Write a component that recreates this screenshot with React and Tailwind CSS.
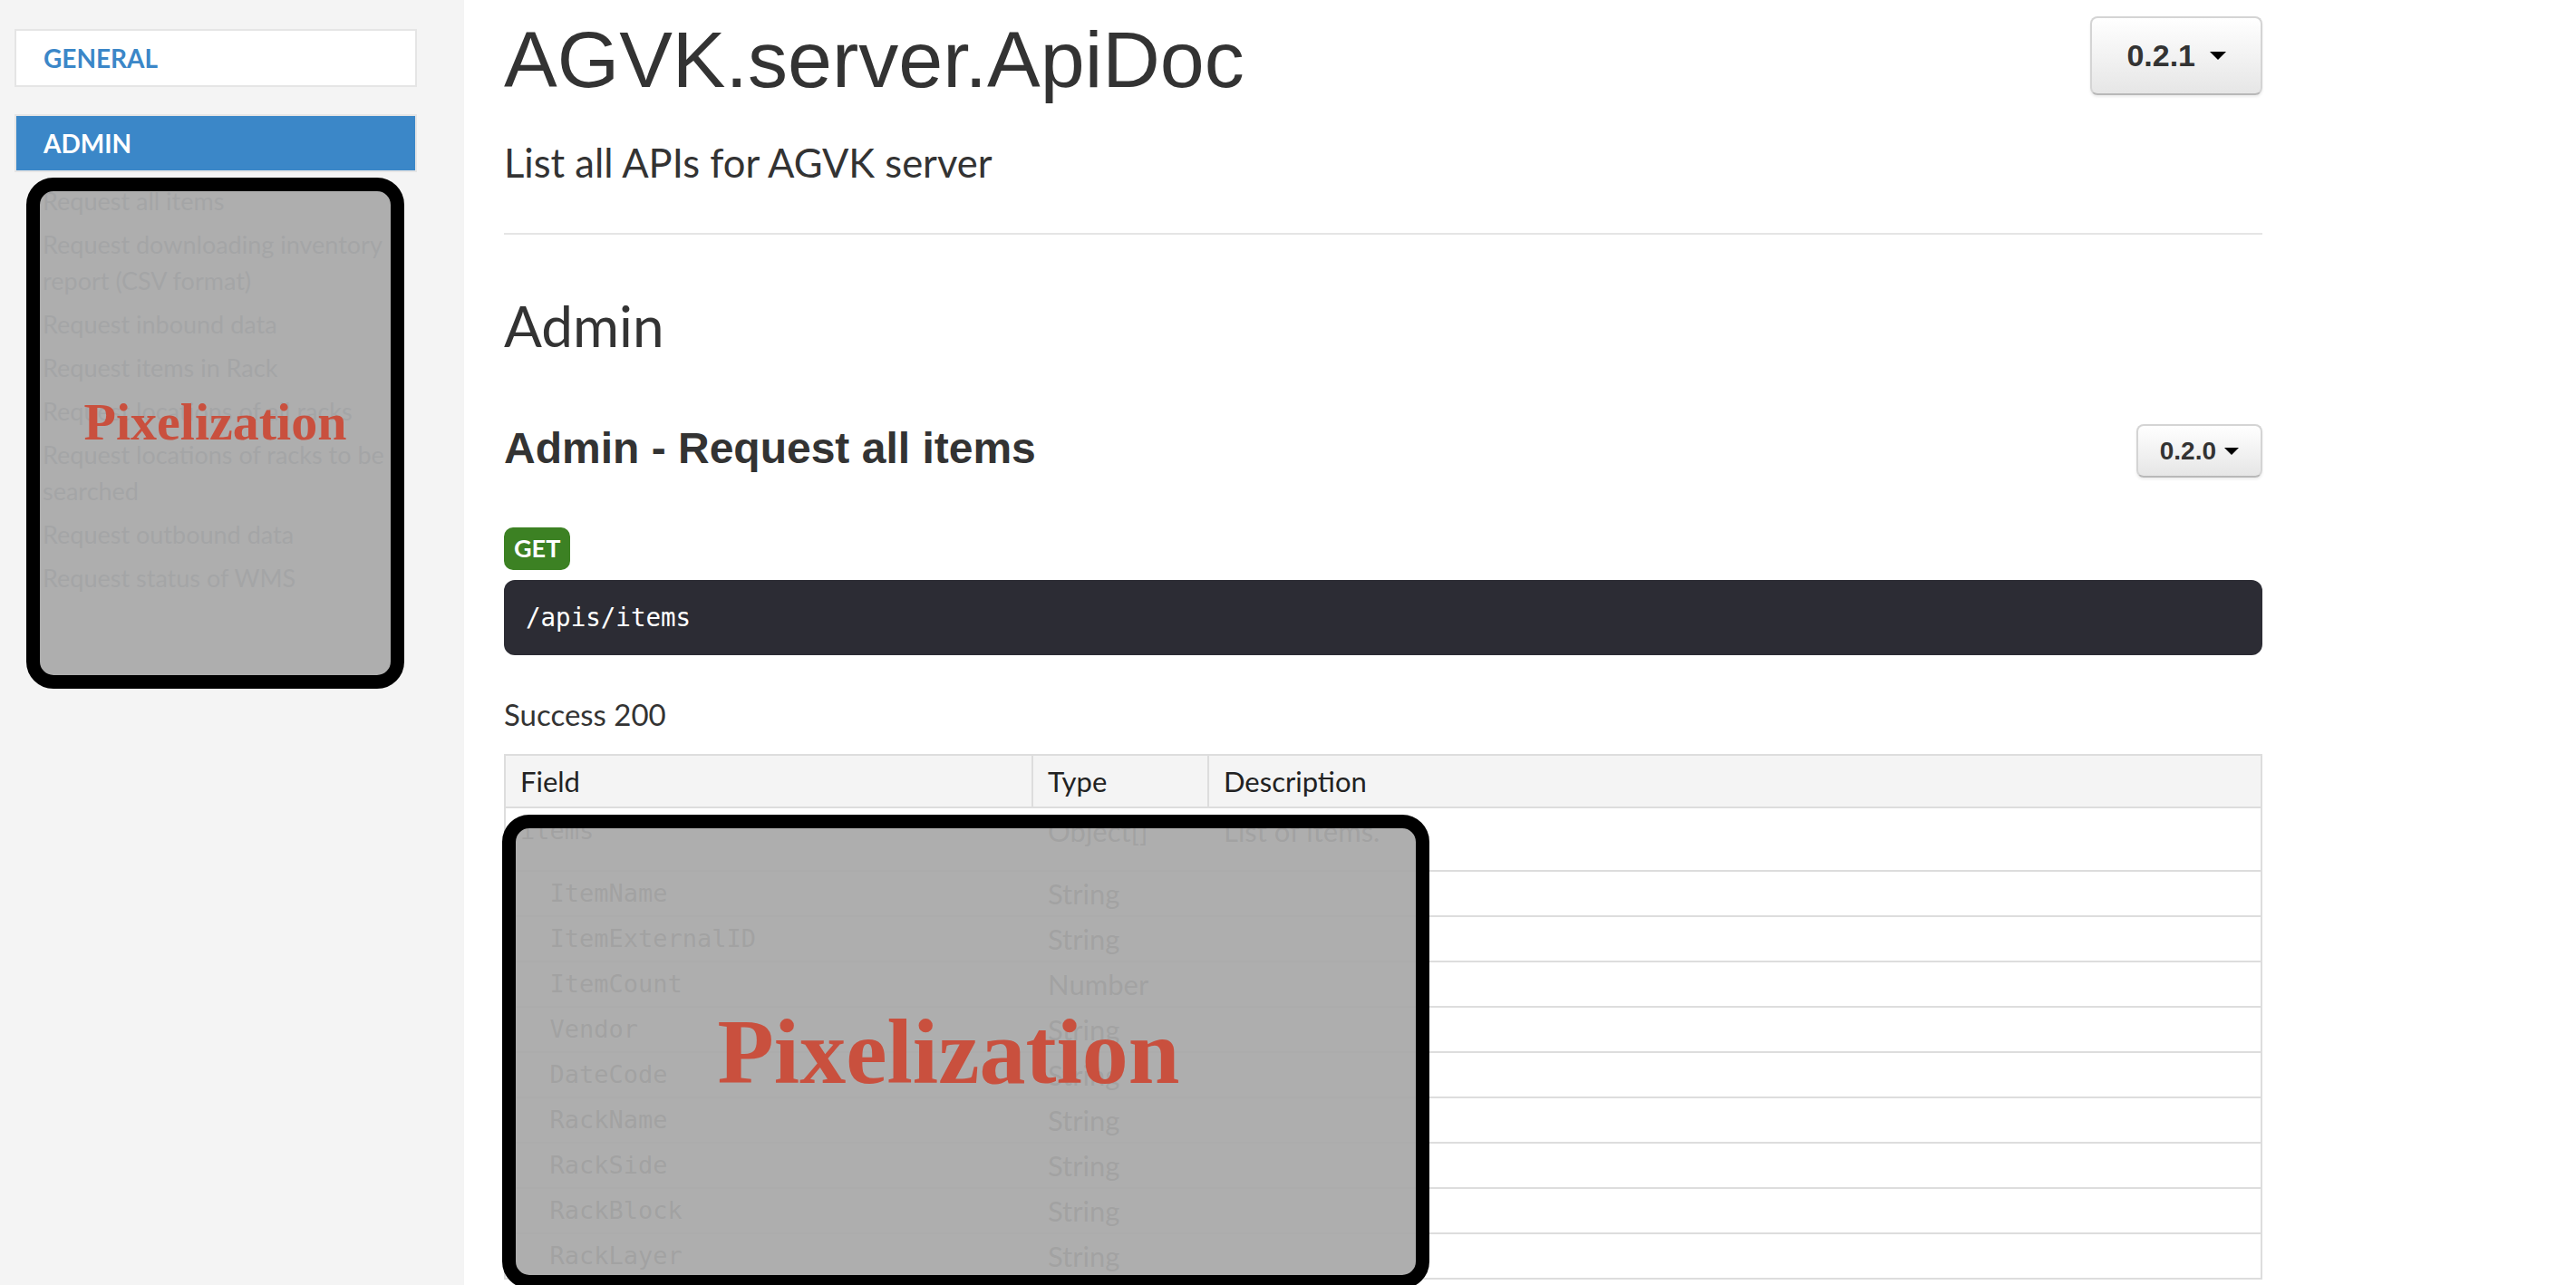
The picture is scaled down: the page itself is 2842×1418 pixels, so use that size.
import React from "react";

const navItems = [
  "Request all items",
  "Request downloading inventory report (CSV format)",
  "Request inbound data",
  "Request items in Rack",
  "Request locations of all racks",
  "Request locations of racks to be searched",
  "Request outbound data",
  "Request status of WMS",
];

const fields = [
  { name: "items", type: "Object[]", desc: "List of items.", nested: false },
  { name: "ItemName", type: "String", nested: true },
  { name: "ItemExternalID", type: "String", nested: true },
  { name: "ItemCount", type: "Number", nested: true },
  { name: "Vendor", type: "String", nested: true },
  { name: "DateCode", type: "String", nested: true },
  { name: "RackName", type: "String", nested: true },
  { name: "RackSide", type: "String", nested: true },
  { name: "RackBlock", type: "String", nested: true },
  { name: "RackLayer", type: "String", nested: true },
];

function VersionButton({ label, big }) {
  return (
    <button
      className={
        big
          ? "mt-[18px] flex h-[87px] items-center gap-[16px] rounded-[8px] border-2 border-[#d4d4d4] border-b-[#b8b8b8] bg-gradient-to-b from-white to-[#e6e6e6] px-[38px] font-['Liberation_Sans',Arial,sans-serif] text-[34px] font-bold text-[#333] shadow-[0_2px_3px_rgba(0,0,0,0.08)]"
          : "mt-[3px] flex h-[59px] items-center gap-[9px] rounded-[8px] border-2 border-[#d4d4d4] border-b-[#b8b8b8] bg-gradient-to-b from-white to-[#e6e6e6] px-[24px] font-['Liberation_Sans',Arial,sans-serif] text-[28px] font-bold text-[#333] shadow-[0_2px_3px_rgba(0,0,0,0.08)]"
      }
    >
      {label}
      <span
        className={
          big
            ? "h-0 w-0 border-x-[9px] border-t-[9px] border-x-transparent border-t-black"
            : "h-0 w-0 border-x-[8px] border-t-[8px] border-x-transparent border-t-black"
        }
      />
    </button>
  );
}

export default function App() {
  return (
    <div className="relative flex h-screen w-full overflow-hidden bg-white font-['Lato',sans-serif] text-[#333]">
      {/* sidebar */}
      <aside className="w-[512px] shrink-0 bg-[#f4f4f4] pt-[32px]">
        <div className="ml-[16px] flex h-[64px] w-[444px] items-center border-2 border-[#e5e5e5] bg-white pl-[30px] text-[28px] font-bold text-[#3b87c8]">
          GENERAL
        </div>
        <div className="ml-[16px] mt-[30px] flex h-[64px] w-[444px] items-center border-2 border-[#e5e5e5] bg-[#3b87c8] pl-[30px] text-[28px] font-bold text-white">
          ADMIN
        </div>
        <ul className="pt-[8px]">
          {navItems.map((item) => (
            <li key={item} className="py-[4px] pl-[47px] pr-[60px] text-[27px] leading-[40px] text-[#56677c]">
              {item}
            </li>
          ))}
        </ul>
      </aside>

      {/* content */}
      <main className="pl-[44px]">
        <div className="w-[1940px]">
          <div className="flex items-start justify-between">
            <h1 className="mt-[16px] font-['Liberation_Sans',Arial,sans-serif] text-[88px] font-normal leading-[100px]">
              AGVK.server.ApiDoc
            </h1>
            <VersionButton label="0.2.1" big />
          </div>
          <p className="mt-[38px] text-[43.5px] leading-[50px]">List all APIs for AGVK server</p>
          <hr className="mt-[53px] border-t-2 border-[#e5e5e5]" />

          <h2 className="mt-[65px] text-[62px] leading-[70px]">Admin</h2>

          <div className="mt-[71px] flex items-start justify-between">
            <h3 className="font-['Liberation_Sans',Arial,sans-serif] text-[48px] font-bold leading-[60px]">
              Admin - Request all items
            </h3>
            <VersionButton label="0.2.0" />
          </div>

          <div className="mt-[55px]">
            <span className="inline-flex h-[47px] items-center rounded-[10px] bg-[#3c8123] px-[11px] text-[27px] font-bold text-white">
              GET
            </span>
          </div>
          <div className="mt-[11px] flex h-[83px] items-center rounded-[12px] bg-[#2c2c34] pl-[24px] font-['DejaVu_Sans_Mono',monospace] text-[27.5px] text-white">
            /apis/items
          </div>

          <p className="mt-[45px] text-[33px] leading-[40px]">Success 200</p>

          <div className="mt-[24px] border-2 border-[#dddddd]">
            <div className="grid h-[56px] grid-cols-[580px_194px_1fr] bg-[#f4f4f4] text-[31px] text-[#222]">
              <div className="flex items-center pl-[16px]">Field</div>
              <div className="flex items-center border-l-2 border-[#dddddd] pl-[16px]">Type</div>
              <div className="flex items-center border-l-2 border-[#dddddd] pl-[16px]">Description</div>
            </div>
            {fields.map((f) => (
              <div
                key={f.name}
                className={
                  f.nested
                    ? "grid h-[50px] grid-cols-[580px_194px_1fr] items-center border-t-2 border-[#dddddd] text-[31px] leading-[34px]"
                    : "grid h-[70px] grid-cols-[580px_194px_1fr] items-start border-t-2 border-[#dddddd] pt-[8px] text-[31px] leading-[34px]"
                }
              >
                <div className="pl-[16px] font-['DejaVu_Sans_Mono',monospace] text-[27px]">
                  {f.nested ? "\u00a0\u00a0" : ""}
                  {f.name}
                </div>
                <div className="pl-[18px]">{f.type}</div>
                <div className="pl-[18px]">{f.desc}</div>
              </div>
            ))}
          </div>
        </div>
      </main>

      {/* redaction overlays */}
      <div className="absolute left-[29px] top-[196px] flex h-[564px] w-[417px] items-center justify-center rounded-[30px] border-[15px] border-black bg-[rgba(169,169,169,0.94)] pb-[24px]">
        <span className="font-['Liberation_Serif',serif] text-[58px] font-bold leading-none text-[#c9503e]">Pixelization</span>
      </div>
      <div className="absolute left-[554px] top-[899px] flex h-[523px] w-[1023px] items-center justify-center rounded-[30px] border-[15px] border-black bg-[rgba(169,169,169,0.94)] pr-[38px]">
        <span className="font-['Liberation_Serif',serif] text-[102px] font-bold leading-none text-[#c9503e]">Pixelization</span>
      </div>
    </div>
  );
}
